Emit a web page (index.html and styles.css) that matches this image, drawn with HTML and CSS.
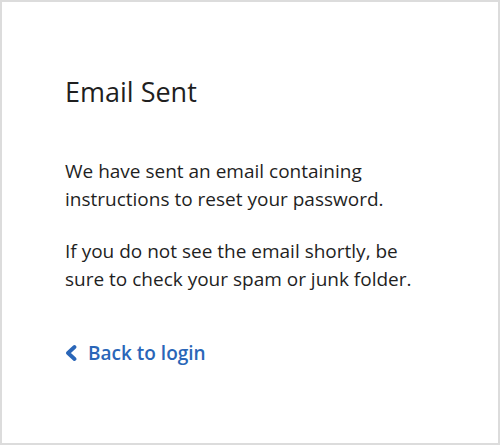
FILE: index.html
```html
<!DOCTYPE html>
<html lang="en">
<head>
<meta charset="utf-8">
<title>Email Sent</title>
<link rel="stylesheet" href="styles.css">
</head>
<body>
<main class="card">
  <h1 class="title">Email Sent</h1>
  <p class="text">We have sent an email containing instructions to reset your password.</p>
  <p class="text">If you do not see the email shortly, be sure to check your spam or junk folder.</p>
  <a class="back" href="#">
    <svg class="chev" width="12" height="18" viewBox="0 0 12 18" aria-hidden="true"><polyline points="9.5,3 3,9 9.5,15" fill="none" stroke="currentColor" stroke-width="3.8" stroke-linecap="round" stroke-linejoin="round"/></svg>
    <span>Back to login</span>
  </a>
</main>
</body>
</html>
```
FILE: styles.css
```css
html, body {
  margin: 0;
  padding: 0;
  background: #ffffff;
}
body {
  font-family: "Open Sans", "Noto Sans", sans-serif;
  color: #1f1f1f;
}
.card {
  box-sizing: border-box;
  width: 500px;
  height: 445px;
  border: 2px solid #dcdcdc;
  padding: 72px 63px 0 63px;
  display: flex;
  flex-direction: column;
  align-items: flex-start;
}
.title {
  margin: 0 0 48px 0;
  font-size: 27px;
  font-weight: 400;
  line-height: 35px;
}
.text {
  margin: 0 0 24px 0;
  font-size: 19px;
  line-height: 28px;
}
.back {
  margin-top: 22px;
  display: flex;
  align-items: center;
  gap: 11px;
  color: #2a66b8;
  text-decoration: none;
  font-size: 19px;
  font-weight: 600;
  line-height: 28px;
}
.chev {
  display: block;
}
```
